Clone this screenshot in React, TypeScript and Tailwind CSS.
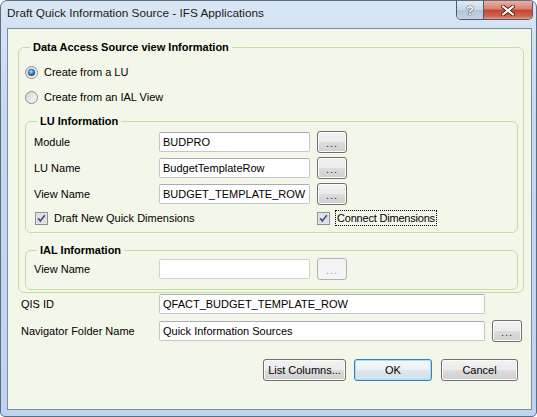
import React from "react"

const font = "font-['Liberation_Sans',Arial,sans-serif]"

function Radio({ checked }: { checked?: boolean }) {
  return (
    <svg width="13" height="13" viewBox="0 0 13 13" className="shrink-0">
      <defs>
        <linearGradient id={checked ? "rg1" : "rg0"} x1="0" y1="0" x2="1" y2="1">
          <stop offset="0" stopColor="#d4d4d4" />
          <stop offset="1" stopColor="#fbfbfb" />
        </linearGradient>
        <radialGradient id="dot" cx="0.4" cy="0.35" r="0.7">
          <stop offset="0" stopColor="#b9e1fb" />
          <stop offset="0.5" stopColor="#3d8fd0" />
          <stop offset="1" stopColor="#17436e" />
        </radialGradient>
      </defs>
      <circle cx="6.5" cy="6.5" r="6" fill={`url(#${checked ? "rg1" : "rg0"})`} stroke="#8e8f8f" />
      {checked && <circle cx="6.5" cy="6.5" r="3.3" fill="url(#dot)" stroke="#1d4a73" strokeWidth="0.6" />}
    </svg>
  )
}

function Check() {
  return (
    <svg width="13" height="13" viewBox="0 0 13 13" className="shrink-0">
      <rect x="0.5" y="0.5" width="12" height="12" fill="#f6f6f6" stroke="#8e8f8f" />
      <rect x="2" y="2" width="9" height="9" fill="#e2e4e8" stroke="#b9bdc3" strokeWidth="0.5" />
      <path d="M3.2 6.4 L5.4 9 L9.8 3.2" fill="none" stroke="#3c4f8a" strokeWidth="1.7" />
    </svg>
  )
}

function Btn({
  children,
  className = "",
  disabled,
  primary,
}: {
  children: React.ReactNode
  className?: string
  disabled?: boolean
  primary?: boolean
}) {
  const look = disabled
    ? "border-[#adb2b5] bg-[#f4f4f4] text-[#8d8d8d]"
    : primary
    ? "border-[#3c7fb1] bg-[linear-gradient(#f4f8fb,#eaf1f6_50%,#dde8f0_50%,#d3e0ea)] shadow-[inset_0_0_0_1px_#a9dcf7] text-black"
    : "border-[#707070] bg-[linear-gradient(#f2f2f2,#ebebeb_50%,#dddddd_50%,#cfcfcf)] shadow-[inset_0_0_0_1px_#fbfbfb] text-black"
  return (
    <div
      className={`h-[22px] shrink-0 rounded-[3px] border flex items-center justify-center text-[11px] ${look} ${className}`}
    >
      {children}
    </div>
  )
}

function Dots({ disabled }: { disabled?: boolean }) {
  return (
    <Btn disabled={disabled} className="w-[30px]">
      <span className={`mt-[3px] text-[11px] tracking-[1px] ${disabled ? "text-[#9a9a9a]" : "text-[#1c2a6a]"}`}>...</span>
    </Btn>
  )
}

function Input({ value, className = "", disabled }: { value?: string; className?: string; disabled?: boolean }) {
  return (
    <div
      className={`h-[20px] shrink-0 rounded-[2px] border bg-white pl-[3px] flex items-center text-[11px] text-black ${
        disabled ? "border-[#d0d3d6]" : "border-[#c3c6ca] border-t-[#abadb3]"
      } ${className}`}
    >
      {value}
    </div>
  )
}

function Row({ label, value, dots = true, disabled }: { label: string; value?: string; dots?: boolean; disabled?: boolean }) {
  return (
    <div className="h-[22px] flex items-center pl-[8px]">
      <span className="w-[125px] shrink-0">{label}</span>
      <Input value={value} disabled={disabled} className="w-[151px]" />
      {dots && <div className="ml-[7px]"><Dots disabled={disabled} /></div>}
    </div>
  )
}

export default function App() {
  return (
    <div className={`${font} w-[537px] h-[417px] overflow-hidden rounded-t-[7px] rounded-b-[5px] border border-[#5d6e80] bg-[linear-gradient(180deg,#d9e6f5_0%,#c6daf1_25%,#bcd4ef_100%)] text-[11px] text-black`}>
      {/* title bar */}
      <div className="h-[27px] flex">
        <span className="self-center pl-[6px] pb-[1px] text-[11.8px] text-[#1b1b1b]">
          Draft Quick Information Source - IFS Applications
        </span>
        <div className="ml-auto mr-[3px] flex self-start h-[19px] rounded-b-[5px] border border-t-0 border-[#4b5b6d] overflow-hidden">
          <div className="w-[27px] flex items-center justify-center border-r border-[#4b5b6d] bg-[linear-gradient(#e3eaf2,#cbd7e4_50%,#b4c5d8_50%,#c3d3e4)]">
            <span className="font-bold text-[13px] leading-none text-white [text-shadow:0_0_1px_#3a4654,0_0_1px_#3a4654,0_0_1px_#3a4654]">?</span>
          </div>
          <div className="w-[48px] flex items-center justify-center bg-[linear-gradient(#eab0a3,#d8806f_45%,#c2452f_50%,#cf6551_85%,#e09a8a)]">
            <svg width="14" height="11" viewBox="0 0 14 11">
              <path d="M2 1.5 L12 9.5 M12 1.5 L2 9.5" stroke="#5a1c12" strokeWidth="4" strokeLinecap="round" />
              <path d="M2 1.5 L12 9.5 M12 1.5 L2 9.5" stroke="#ffffff" strokeWidth="2.2" strokeLinecap="round" />
            </svg>
          </div>
        </div>
      </div>

      {/* client area */}
      <div className="ml-[6px] w-[525px] h-[382px] border border-[#7e8d9d] bg-[#f3f7e9]">
        <fieldset className="ml-[10px] mt-[11px] w-[506px] h-[253px] rounded-[6px] border border-[#c6dda2]">
          <legend className="ml-[11px] px-[3px] font-bold leading-[14px]">Data Access Source view Information</legend>

          <div className="mt-[10px] h-[16px] flex items-center pl-[6px] gap-[6px]">
            <Radio checked />
            <span>Create from a LU</span>
          </div>
          <div className="mt-[9px] h-[16px] flex items-center pl-[6px] gap-[6px]">
            <Radio />
            <span>Create from an IAL View</span>
          </div>

          <fieldset className="ml-[6px] mt-[9px] w-[493px] h-[119px] rounded-[6px] border border-[#c6dda2]">
            <legend className="ml-[11px] px-[3px] font-bold leading-[14px]">LU Information</legend>
            <div className="mt-[3px] flex flex-col gap-[4px]">
              <Row label="Module" value="BUDPRO" />
              <Row label="LU Name" value="BudgetTemplateRow" />
              <Row label="View Name" value="BUDGET_TEMPLATE_ROW" />
            </div>
            <div className="mt-[5px] h-[16px] flex items-center">
              <div className="w-[291px] pl-[9px] flex items-center gap-[6px]">
                <Check />
                <span>Draft New Quick Dimensions</span>
              </div>
              <div className="flex items-center gap-[5px]">
                <Check />
                <span className="px-[1px] leading-[14px] tracking-[-0.2px] border border-dotted border-black">Connect Dimensions</span>
              </div>
            </div>
          </fieldset>

          <fieldset className="ml-[6px] mt-[10px] w-[493px] h-[47px] rounded-[6px] border border-[#c6dda2]">
            <legend className="ml-[11px] px-[3px] font-bold leading-[14px]">IAL Information</legend>
            <div className="mt-[1px]">
              <Row label="View Name" disabled />
            </div>
          </fieldset>
        </fieldset>

        <div className="h-[22px] flex items-center pl-[13px]">
          <span className="w-[138px] shrink-0">QIS ID</span>
          <Input value="QFACT_BUDGET_TEMPLATE_ROW" className="w-[326px]" />
        </div>
        <div className="mt-[5px] h-[22px] flex items-center pl-[13px]">
          <span className="w-[138px] shrink-0">Navigator Folder Name</span>
          <Input value="Quick Information Sources" className="w-[326px]" />
          <div className="ml-[7px]"><Dots /></div>
        </div>

        <div className="mt-[17px] flex pl-[255px]">
          <Btn className="w-[83px]">List Columns...</Btn>
          <Btn primary className="ml-[8px] w-[78px]">OK</Btn>
          <Btn className="ml-[9px] w-[77px]">Cancel</Btn>
        </div>
      </div>
    </div>
  )
}
